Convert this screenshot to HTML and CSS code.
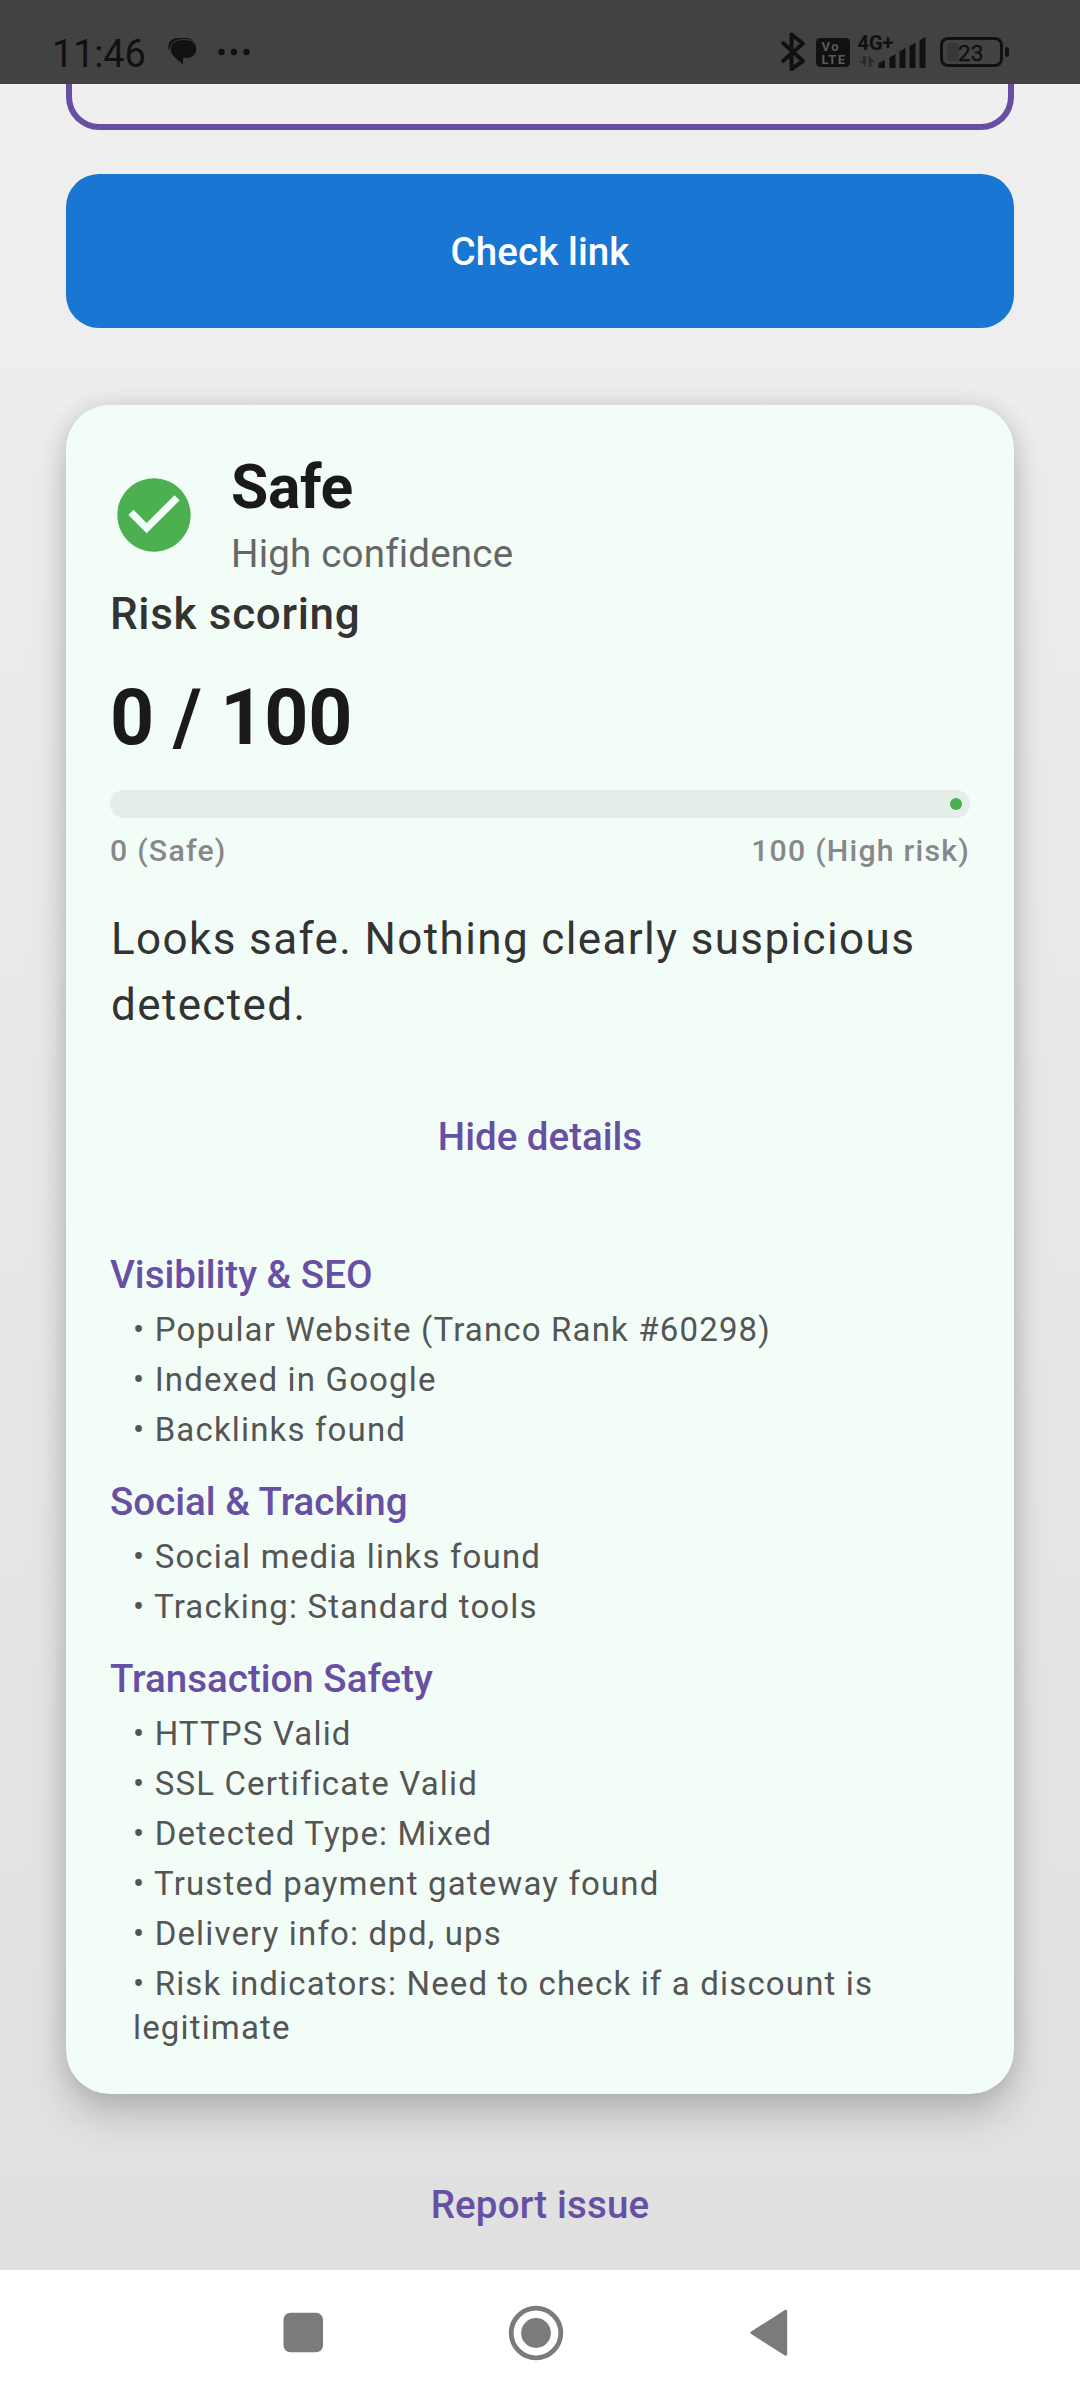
FILE: index.html
```html
<!DOCTYPE html>
<html lang="en">
<head>
<meta charset="utf-8">
<title>Link check</title>
<link rel="stylesheet" href="styles.css">
</head>
<body>
<div class="screen">
  <header class="status-bar">
    <span class="clock">11:46</span>
    <svg class="chat-icon" width="30" height="30" viewBox="0 0 30 30"><path d="M1 13C-1 5 4 1 10 1h8q5 0 7 3" fill="#111"/><path d="M13 2.700h6.500a9.300 9.300 0 0 1 0 18.600H15.500V28.500L5 19C-1 12 4 2.700 13 2.700z" fill="#111" stroke="#424242" stroke-width="1"/></svg>
    <svg class="more-icon" width="32" height="8" viewBox="0 0 32 8" fill="#111"><circle cx="3.500" cy="4" r="3.200"/><circle cx="16" cy="4" r="3.200"/><circle cx="28.500" cy="4" r="3.200"/></svg>
    <svg class="system-icons" width="232" height="42" viewBox="780 31 232 42">
      <path d="M783 43 803 61 791.500 69V34.500L803 43.500 783 61" fill="none" stroke="#111" stroke-width="4" stroke-linejoin="round" stroke-linecap="round"/>
      <rect x="816" y="38" width="34" height="29" rx="4.500" fill="#111"/>
      <text x="821.500" y="51" class="volte" textLength="17">Vo</text><text x="821.500" y="63.500" class="volte" textLength="23.500">LTE</text>
      <text x="857.500" y="50" class="network" textLength="36">4G+</text>
      <path d="M866 56v11l-6.500-6h3.500v-5zM868.500 67V56l6.500 6h-3.500v5z" fill="#2b2b2b"/>
      <path d="M878.500 63l6.500-3v8h-6.500zM889.500 57.500l6-3.500v14h-6zM899.500 51.500l6-3.500v20h-6zM909.500 46l6-3.500V68h-6zM919.500 40.500l6-3.500v31h-6z" fill="#111"/>
      <rect x="941.500" y="38.500" width="60" height="27" rx="6.500" fill="none" stroke="#111" stroke-width="3"/>
      <rect x="947" y="43" width="11.500" height="18" rx="2" fill="#383838"/>
      <rect x="1005" y="47" width="4" height="10" rx="2" fill="#111"/>
      <text x="958" y="60.500" class="battery">23</text>
    </svg>
  </header>
  <main class="content">
    <div class="url-field"></div>
    <button class="check-button">Check link</button>
    <section class="card">
      <div class="verdict">
        <svg width="88" height="88" viewBox="0 0 24 24"><path fill="#4caf50" d="M12 2C6.480 2 2 6.480 2 12s4.480 10 10 10 10-4.480 10-10S17.520 2 12 2zm-2 15l-5-5 1.410-1.410L10 14.170l7.590-7.590L19 8l-9 9z"/></svg>
        <div><h1 class="verdict-title">Safe</h1><p class="confidence">High confidence</p></div>
      </div>
      <h2 class="risk-title">Risk scoring</h2>
      <p class="score">0 / 100</p>
      <div class="track"><span class="track-stop"></span></div>
      <div class="scale"><span>0 (Safe)</span><span>100 (High risk)</span></div>
      <p class="summary">Looks safe. Nothing clearly suspicious detected.</p>
      <button class="text-button">Hide details</button>
      <div class="details">
        <section><h3 class="group-title">Visibility &amp; SEO</h3>
          <ul class="findings"><li>• Popular Website (Tranco Rank #60298)</li><li>• Indexed in Google</li><li>• Backlinks found</li></ul></section>
        <section><h3 class="group-title">Social &amp; Tracking</h3>
          <ul class="findings"><li>• Social media links found</li><li>• Tracking: Standard tools</li></ul></section>
        <section><h3 class="group-title">Transaction Safety</h3>
          <ul class="findings"><li>• HTTPS Valid</li><li>• SSL Certificate Valid</li><li>• Detected Type: Mixed</li><li>• Trusted payment gateway found</li><li>• Delivery info: dpd, ups</li><li>• Risk indicators: Need to check if a discount is legitimate</li></ul></section>
      </div>
    </section>
    <button class="text-button report">Report issue</button>
  </main>
  <nav class="nav-bar">
    <svg width="1080" height="130" viewBox="0 0 1080 130" fill="#7b7b7b">
      <rect x="283.500" y="42.700" width="39.500" height="39.500" rx="7"/>
      <circle cx="536" cy="63" r="24.800" fill="none" stroke="#7b7b7b" stroke-width="4.800"/><circle cx="536" cy="63" r="14.900"/>
      <path d="M752 62.800 785.700 41.300V84.300z" stroke="#7b7b7b" stroke-width="3" stroke-linejoin="round"/>
    </svg>
  </nav>
</div>
</body>
</html>
```
FILE: styles.css
```css
* { box-sizing: border-box; margin: 0; padding: 0; }
body { font-family: Roboto, "Noto Sans", sans-serif; font-size: 38.5px; }
.screen { width: 1080px; height: 2400px; display: flex; flex-direction: column; overflow: hidden; background: linear-gradient(#f0f0f0, #e0e0e0 2270px); }
.status-bar { height: 84px; flex: none; display: flex; align-items: center; padding: 20px 68px 0 52px; background: #424242; color: #111; }
.clock { width: 116px; padding-top: 3px; font-size: 38px; line-height: 44px; letter-spacing: -.2px; }
.more-icon { margin-left: 20px; }
.system-icons { margin-left: auto; }
.volte { font: 700 13px Roboto, sans-serif; fill: #5a5a5a; }
.network { font: 700 20px Roboto, sans-serif; fill: #111; }
.battery { font: 400 22.5px Roboto, sans-serif; fill: #111; stroke: #111; stroke-width: .4px; }
.content { flex: 1; display: flex; flex-direction: column; padding: 0 66px; }
.url-field { height: 46px; flex: none; border: 6px solid #6750a4; border-top: 0; border-radius: 0 0 33px 33px; }
.check-button { height: 154px; flex: none; margin-top: 44px; border: 0; border-radius: 33px; background: #1976d2; color: #fff; font: 500 38.5px/55px Roboto, sans-serif; letter-spacing: .1px; }
.card { height: 1689px; flex: none; margin-top: 77px; padding: 44px; border-radius: 44px; background: #f3fdf8; box-shadow: 0 22px 36px rgba(0,0,0,.17), 0 0 24px rgba(0,0,0,.12); }
.verdict { display: flex; align-items: center; gap: 33px; }
.verdict-title { font-size: 60.5px; line-height: 77px; font-weight: 700; letter-spacing: -.35px; color: #1a1a1a; }
.confidence { line-height: 55px; letter-spacing: .2px; color: #666; }
.risk-title { font-size: 44px; line-height: 66px; font-weight: 500; letter-spacing: .68px; color: #333; }
.score { margin: 21.5px 0 21.5px; font-size: 77px; line-height: 99px; font-weight: 700; letter-spacing: -.2px; color: #1a1a1a; }
.track { height: 28px; margin-top: 1px; display: flex; align-items: center; justify-content: flex-end; padding-right: 8px; border-radius: 14px; background: #e6eee9; }
.track-stop { width: 12px; height: 12px; border-radius: 50%; background: #4caf50; }
.score + .track { margin-top: 22px; }
.scale { margin-top: 11px; display: flex; justify-content: space-between; font-size: 30.25px; line-height: 44px; font-weight: 500; letter-spacing: 1.22px; color: #888; }
.summary { margin: 33px -1px 0 1px; font-size: 44px; line-height: 66px; letter-spacing: 1.375px; color: #333; }
.text-button { display: block; align-self: center; border: 0; background: none; color: #6750a4; font: 500 38.5px/55px Roboto, sans-serif; letter-spacing: .15px; }
.card .text-button { height: 132px; margin: 33px auto 44px; letter-spacing: 0; }
.details { display: flex; flex-direction: column; gap: 22px; }
.group-title { font-size: 38.5px; line-height: 55px; font-weight: 500; letter-spacing: 0; color: #6750a4; }
.findings { display: flex; flex-direction: column; gap: 6px; list-style: none; margin: 6px 0 0 23px; font-size: 33px; line-height: 44px; letter-spacing: 1.16px; color: #555; }
.report { margin-top: 83px; }
.nav-bar { height: 130px; flex: none; background: #fff; }
```
